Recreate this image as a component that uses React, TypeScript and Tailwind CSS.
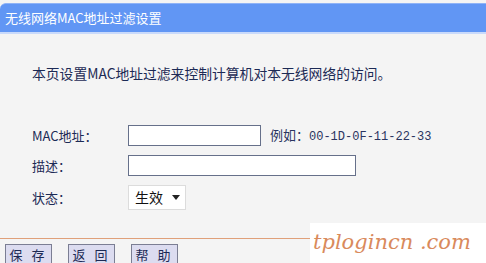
export default function App() {
  const cjk = { fontFamily: '"Noto Sans CJK SC", "Liberation Sans", sans-serif' };
  return (
    <div className="relative h-[263px] w-[486px] overflow-hidden bg-[#f4f4f4] text-[#1c2a55]" style={cjk}>
      <div className="pt-[3px]">
        <div className="flex h-[29px] items-center rounded-tl-[6px] border-t border-[#8fb3f7] bg-[#6196f4] pl-[5px] text-[13px] text-white">
          无线网络MAC地址过滤设置
        </div>
        <div className="h-[2px] bg-[#c9dafb]" />
      </div>

      <p className="mt-[30px] pl-[32px] text-[13.8px] leading-[18px]">本页设置MAC地址过滤来控制计算机对本无线网络的访问。</p>

      <div className="mt-[43px] flex flex-col gap-[9px] pl-[32px] text-[13px]">
        <div className="flex h-[21px] items-center">
          <span className="w-[96px]">MAC地址：</span>
          <div className="h-[21px] w-[133px] border border-[#66708a] bg-white" />
          <span className="ml-[9px] text-[#2a3460]">
            例如：<span className="text-[12px]" style={{ fontFamily: '"Liberation Mono", monospace' }}>00-1D-0F-11-22-33</span>
          </span>
        </div>
        <div className="flex h-[21px] items-center">
          <span className="w-[96px]">描述：</span>
          <div className="h-[21px] w-[228px] border border-[#66708a] bg-white" />
        </div>
        <div className="flex h-[25px] items-center">
          <span className="w-[96px]">状态：</span>
          <div className="flex h-[25px] w-[58px] items-center justify-between border border-[#dcdcdc] bg-white pl-[6px] pr-[5px] text-[14px] text-[#111]">
            <span>生效</span>
            <svg width="8" height="5" viewBox="0 0 8 5"><path d="M0 0H8L4 5Z" fill="#222" /></svg>
          </div>
        </div>
      </div>

      <div className="absolute left-0 top-[238px] h-px w-[312px] bg-[#e0a07a]" />
      <div className="absolute left-[310px] top-[223px] flex h-[40px] w-[176px] items-center whitespace-nowrap bg-white pl-[3px] text-[21px] italic text-[#d98a5c]" style={{ fontFamily: '"DejaVu Serif", serif' }}>
        tplogincn .com
      </div>

      <div className="absolute left-[5px] top-[244px] flex gap-[16px] text-[13px]">
        {["保 存", "返 回", "帮 助"].map((t) => (
          <div key={t} className="flex h-[22px] w-[47px] items-center justify-center border border-[#7b7e93] bg-[#dcdcf0] tracking-[3px]">
            {t}
          </div>
        ))}
      </div>
    </div>
  );
}
